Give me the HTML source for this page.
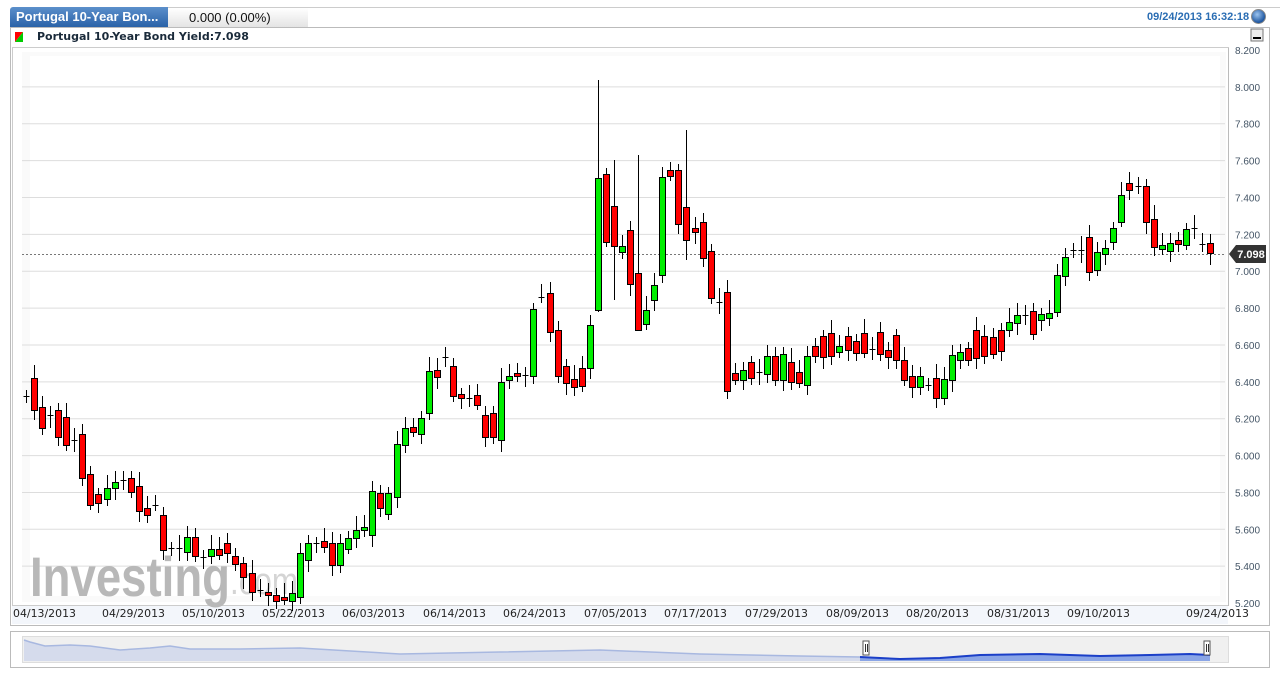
<!DOCTYPE html>
<html><head><meta charset="utf-8">
<style>
body{margin:0;width:1280px;height:675px;background:#fff;font-family:"Liberation Sans",sans-serif;overflow:hidden;position:relative}
.tabs{position:absolute;left:10px;top:7px;width:300px;height:20px}
.tab1{position:absolute;left:0;top:0;width:158px;height:20px;background:linear-gradient(#5b8fcb,#2a62a8);color:#fff;font-weight:bold;font-size:13px;line-height:20px;padding-left:6px;box-sizing:border-box;border-radius:3px 0 0 0}
.tab2{position:absolute;left:158px;top:0;width:140px;height:20px;background:linear-gradient(#fff,#e4e4e4);font-size:13px;line-height:20px;padding-left:21px;box-sizing:border-box;color:#111;border-top:1px solid #ccc}
.time{position:absolute;left:1147px;top:11px;font-size:11px;font-weight:bold;color:#2a6db3}
.ball{position:absolute;left:1251px;top:9px;width:13px;height:13px;border-radius:50%;background:radial-gradient(circle at 40% 35%,#9cc4ef,#1e56a0 70%);border:1px solid #888}
</style></head><body>
<div class="tabs"><div class="tab1">Portugal 10-Year Bon...</div><div class="tab2">0.000 (0.00%)</div></div>
<div class="time">09/24/2013 16:32:18</div><div class="ball"></div>
<svg id="s" width="1280" height="675" style="position:absolute;left:0;top:0;z-index:-1" xmlns="http://www.w3.org/2000/svg"></svg>
<script>
var s=document.getElementById('s');var h='';
function r(x,y,w,hh,f,st){h+='<rect x="'+x+'" y="'+y+'" width="'+w+'" height="'+hh+'" fill="'+f+'"'+(st?' stroke="'+st+'"':'')+'/>';}
function l(x1,y1,x2,y2,c,d){h+='<line x1="'+x1+'" y1="'+y1+'" x2="'+x2+'" y2="'+y2+'" stroke="'+c+'"'+(d?' stroke-dasharray="'+d+'"':'')+'/>';}
function t(x,y,str,sz,c,a,w,f){h+='<text x="'+x+'" y="'+y+'" font-size="'+sz+'" fill="'+c+'" font-family="'+(f||'Liberation Sans')+',sans-serif"'+(a?' text-anchor="'+a+'"':'')+(w?' font-weight="bold"':'')+'>'+str+'</text>';}
l(300,7.5,1280,7.5,'#ccc');
r(10.5,27.5,1259,598,'#fff','#bbb');
r(10.5,631.5,1259,36,'#fff','#bbb');
h+='<polygon points="15,32 23,32 15,42" fill="#f00"/><polygon points="23,32 23,42 15,42" fill="#0c0"/>';
t(37,40,'Portugal 10-Year Bond Yield:7.098',11,'#1a2a3a',null,1,'DejaVu Sans');
r(1251,29,12,12,'#eee','#777');r(1253,37,8,2,'#000');
r(12.5,47.5,1216,558,'#fff','#ccc');
r(22,52,1204,550,'#fafafa');r(30,56,1190,540,'#fff');
for(var i=0;i<16;i++){var v=8.2-i*0.2,y=50+i*36.87;if(i>0&&i<15)l(22,y,1225,y,'#ddd');t(1235,y+4,v.toFixed(3),10,'#445566');}
l(1228.5,48,1228.5,606,'#bbb');
r(12,606,1216,18,'#f3f6fb');
var dates=[['04/13/2013',13],['04/29/2013',102],['05/10/2013',182],['05/22/2013',262],['06/03/2013',342],['06/14/2013',423],['06/24/2013',503],['07/05/2013',584],['07/17/2013',664],['07/29/2013',745],['08/09/2013',826],['08/20/2013',906],['08/31/2013',987],['09/10/2013',1067],['09/24/2013',1186]];
dates.forEach(function(d){h+='<text x="'+d[1]+'" y="617" font-size="11" fill="#222" font-family="DejaVu Sans,sans-serif" textLength="63" lengthAdjust="spacingAndGlyphs">'+d[0]+'</text>';});
h+='<text x="30" y="596" font-size="56" fill="#b8b8b8" font-weight="bold" font-family="Liberation Sans,sans-serif" textLength="200" lengthAdjust="spacingAndGlyphs">Investing</text>';
h+='<text x="230" y="594" font-size="38" fill="#d4d4d4" font-family="Liberation Sans,sans-serif" textLength="68" lengthAdjust="spacingAndGlyphs">.com</text>';
l(22,254.5,1225,254.5,'#777','2,2');
var c=[[396,398,'d'],[378,410,'r'],[407,428,'r'],[415,416,'d'],[410,437,'r'],[417,445,'r'],[440,441,'d'],[434,478,'r'],[474,505,'r'],[494,503,'r'],[488,499,'g'],[482,488,'g'],[480,481,'d'],[478,492,'r'],[486,511,'r'],[508,515,'r'],[505,506,'d'],[515,550,'r'],[548,549,'d'],[548,549,'d'],[537,552,'g'],[537,556,'r'],[557,558,'d'],[549,556,'g'],[549,555,'r'],[543,553,'r'],[556,564,'r'],[563,577,'r'],[573,592,'r'],[590,591,'d'],[592,595,'r'],[595,601,'r'],[597,600,'r'],[593,601,'g'],[553,597,'g'],[543,560,'g'],[543,544,'d'],[541,547,'r'],[543,565,'r'],[543,565,'g'],[538,549,'g'],[530,538,'g'],[527,530,'g'],[491,535,'g'],[493,508,'r'],[493,514,'g'],[444,497,'g'],[428,445,'g'],[427,432,'r'],[418,434,'g'],[371,413,'g'],[370,377,'r'],[357,358,'d'],[366,396,'r'],[394,398,'r'],[398,399,'d'],[395,405,'r'],[415,437,'r'],[413,437,'r'],[382,440,'g'],[376,380,'g'],[373,376,'r'],[375,376,'d'],[309,376,'g'],[297,298,'d'],[293,332,'r'],[330,376,'r'],[366,383,'r'],[379,387,'r'],[368,386,'r'],[325,368,'g'],[178,310,'g'],[174,242,'r'],[206,246,'r'],[246,252,'g'],[230,284,'r'],[273,330,'r'],[310,324,'g'],[285,300,'g'],[177,275,'g'],[170,176,'r'],[170,224,'r'],[207,240,'r'],[228,232,'r'],[222,258,'r'],[251,298,'r'],[302,303,'d'],[292,391,'r'],[373,380,'r'],[370,380,'g'],[362,378,'r'],[372,373,'d'],[356,374,'g'],[356,380,'r'],[354,380,'g'],[362,382,'r'],[372,383,'r'],[356,385,'g'],[346,356,'r'],[336,357,'r'],[333,356,'r'],[346,352,'g'],[336,350,'r'],[341,353,'r'],[333,353,'r'],[349,350,'d'],[332,354,'r'],[350,357,'r'],[335,360,'r'],[360,380,'r'],[376,387,'r'],[376,387,'g'],[385,386,'d'],[378,398,'r'],[379,398,'g'],[355,380,'g'],[352,360,'g'],[348,360,'r'],[330,358,'r'],[336,356,'r'],[337,354,'r'],[330,351,'r'],[322,330,'g'],[315,323,'g'],[315,316,'d'],[311,334,'r'],[314,320,'g'],[313,318,'g'],[275,312,'g'],[257,276,'g'],[250,251,'d'],[250,251,'d'],[237,272,'r'],[252,270,'g'],[248,254,'g'],[228,242,'g'],[195,222,'g'],[183,190,'r'],[186,187,'d'],[186,222,'r'],[219,247,'r'],[245,249,'g'],[243,251,'g'],[240,244,'r'],[229,245,'g'],[228,229,'d'],[244,245,'d'],[243,253,'r']];
var n=c.length,x0=26,x1=1210;
var wk={71:[80,312],82:[130,260],76:[155,325],73:[160,300]};
c.forEach(function(k,i){var x=Math.round(x0+(x1-x0)*i/(n-1))+0.5;var a=k[0],b=k[1];
var wt=a-6-((i*7)%9),wb=b+5+((i*5)%8);if(wk[i]){wt=wk[i][0];wb=wk[i][1];}
l(x,wt,x,wb,'#000');
if(k[2]=='d'){l(x-3,a+0.5,x+3,a+0.5,'#000');}else r(x-3,a+0.5,6,Math.max(b-a,2),k[2]=='r'?'#f00':'#0e0','#000');});
h+='<polygon points="1229,254 1236,245 1266,245 1266,263 1236,263" fill="#333"/>';
t(1251,258,'7.098',11,'#fff','middle',1);
r(22.5,636.5,1206,26,'#f0f0f0','#ddd');
var pts='24,640 30,642 45,646 70,645 90,646 120,650 150,648 170,646 190,649 240,649 300,648 400,654 500,652 600,650 700,654 800,656 860,657';
h+='<polygon points="'+pts+' 860,661 24,661" fill="#d5dbec"/><polyline points="'+pts+'" fill="none" stroke="#a8b8e0" stroke-width="1.5"/>';
var p2='860,657 900,659 940,658 980,655 1040,654 1100,656 1150,655 1190,654 1210,655';
h+='<polygon points="'+p2+' 1210,661 860,661" fill="#8aa5e6"/><polyline points="'+p2+'" fill="none" stroke="#1b3fc8" stroke-width="2"/>';
[866,1207].forEach(function(x){r(x-3,641,6,14,'#fff','#555');l(x-0.5,644,x-0.5,652,'#333');l(x+1.5,644,x+1.5,652,'#333');});
s.innerHTML=h;
</script>
</body></html>
